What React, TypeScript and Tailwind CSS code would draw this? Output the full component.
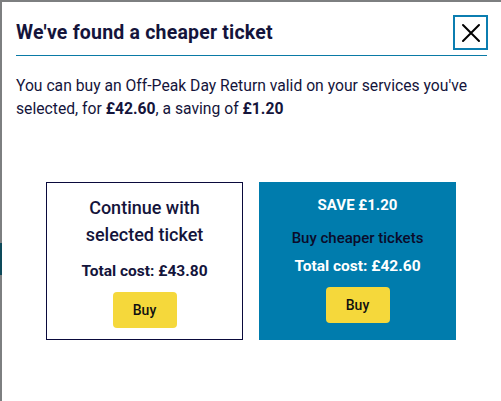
import React from "react";

export default function App() {
  return (
    <div className="relative w-[501px] h-[401px] bg-[#7d7f80] overflow-hidden" style={{ fontFamily: "Roboto, 'Liberation Sans', sans-serif" }}>
      <div className="absolute left-0 top-[243px] w-[2px] h-[32px] bg-[#0d4a5a]" />
      <div className="absolute left-[2px] top-[2px] right-0 bottom-0 bg-white text-[#14143b]">
        <div className="flex items-center justify-between mx-[14px] mr-[14px] pt-[13px] pb-[5px] border-b border-[#0a7aa6]">
          <h1 className="text-[19.5px] leading-[22px] font-bold tracking-[0.2px]">We've found a cheaper ticket</h1>
          <button className="w-[35px] h-[35px] border-2 border-[#0b7db0] flex items-center justify-center mr-[-1px]">
            <svg width="20" height="20" viewBox="0 0 20 20" fill="none" stroke="#000" strokeWidth="2" strokeLinecap="round">
              <path d="M2 2 L18 18 M18 2 L2 18" />
            </svg>
          </button>
        </div>
        <p className="mx-[14px] mt-[18px] text-[15.7px] leading-[23px]">
          You can buy an Off-Peak Day Return valid on your services you've selected, for <b>£42.60</b>, a saving of <b>£1.20</b>
        </p>
        <div className="flex justify-center gap-[16px] mt-[62px] ml-[-1px]">
          <div className="w-[197px] h-[158px] border border-[#0a0a3c] flex flex-col items-center text-center pt-[11px]">
            <div className="text-[18px] leading-[27px] font-medium">Continue with<br />selected ticket</div>
            <div className="mt-[12px] text-[15.5px] leading-[22px] font-bold">Total cost: £43.80</div>
            <button className="mt-[10px] w-[64px] h-[36px] rounded-[4px] bg-[#f5d83b] text-[14px] font-medium text-[#111]">Buy</button>
          </div>
          <div className="w-[197px] h-[158px] bg-[#007cad] flex flex-col items-center text-center pt-[12px]">
            <div className="text-[15px] leading-[22px] font-bold text-white">SAVE £1.20</div>
            <div className="mt-[11px] text-[15px] leading-[22px] font-medium text-[#0b0b2a]">Buy cheaper tickets</div>
            <div className="mt-[6px] text-[15.5px] leading-[22px] font-bold text-white">Total cost: £42.60</div>
            <button className="mt-[10px] w-[64px] h-[36px] rounded-[4px] bg-[#f5d83b] text-[14px] font-medium text-[#111]">Buy</button>
          </div>
        </div>
      </div>
    </div>
  );
}
